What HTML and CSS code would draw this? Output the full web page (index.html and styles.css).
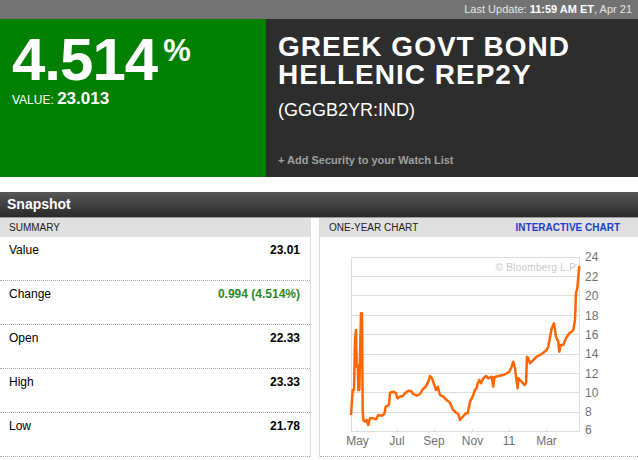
FILE: index.html
```html
<!DOCTYPE html>
<html lang="en">
<head>
<meta charset="UTF-8">
<meta name="viewport" content="width=device-width, initial-scale=1.0">
<title>GGGB2YR:IND Quote</title>
<link rel="stylesheet" href="styles.css">
</head>
<body>

<div class="topbar">Last Update: <b>11:59 AM ET</b>, Apr 21</div>

<div class="quote">
    <div class="quote-price">
        <div class="price">4.514<span class="pct">%</span></div>
        <div class="value">VALUE: <b>23.013</b></div>
    </div>
    <div class="quote-name">
        <h1 class="name">GREEK GOVT BOND<br>HELLENIC REP2Y</h1>
        <div class="ticker">(GGGB2YR:IND)</div>
        <div class="watch">+ Add Security to your Watch List</div>
    </div>
</div>

<div class="snapshot">
    <div class="section-head">Snapshot</div>
    <div class="snap-body">
        <div class="summary">
            <div class="panel-head">SUMMARY</div>
            <div class="row"><span>Value</span><b>23.01</b></div>
            <div class="row"><span>Change</span><b class="up">0.994 (4.514%)</b></div>
            <div class="row"><span>Open</span><b>22.33</b></div>
            <div class="row"><span>High</span><b>23.33</b></div>
            <div class="row"><span>Low</span><b>21.78</b></div>
        </div>
        <div class="chart-panel">
            <div class="panel-head">
                <span>ONE-YEAR CHART</span>
                <a class="chart-link" href="#">INTERACTIVE CHART</a>
            </div>
            <div class="chart">
                <svg width="318" height="219" viewBox="320 237 318 219">
                    <g stroke="#dddddd" stroke-width="1" fill="none">
                        <rect x="351.5" y="257.5" width="228" height="174"/>
                        <line x1="351" y1="276.5" x2="580" y2="276.5"/>
                        <line x1="351" y1="295.5" x2="580" y2="295.5"/>
                        <line x1="351" y1="315.5" x2="580" y2="315.5"/>
                        <line x1="351" y1="334.5" x2="580" y2="334.5"/>
                        <line x1="351" y1="354.5" x2="580" y2="354.5"/>
                        <line x1="351" y1="373.5" x2="580" y2="373.5"/>
                        <line x1="351" y1="392.5" x2="580" y2="392.5"/>
                        <line x1="351" y1="412.5" x2="580" y2="412.5"/>
                        <line x1="357.5" y1="429" x2="357.5" y2="432"/>
                        <line x1="397.5" y1="429" x2="397.5" y2="432"/>
                        <line x1="434.5" y1="429" x2="434.5" y2="432"/>
                        <line x1="472.5" y1="429" x2="472.5" y2="432"/>
                        <line x1="509.5" y1="429" x2="509.5" y2="432"/>
                        <line x1="546.5" y1="429" x2="546.5" y2="432"/>
                    </g>
                    <text class="mark" x="578" y="271" text-anchor="end">© Bloomberg L.P.</text>
                    <g class="axis">
                        <text x="585" y="261">24</text>
                        <text x="585" y="281">22</text>
                        <text x="585" y="300">20</text>
                        <text x="585" y="320">18</text>
                        <text x="585" y="339">16</text>
                        <text x="585" y="358">14</text>
                        <text x="585" y="378">12</text>
                        <text x="585" y="397">10</text>
                        <text x="585" y="416">8</text>
                        <text x="585" y="434">6</text>
                    </g>
                    <g class="axis" text-anchor="middle">
                        <text x="357.5" y="445">May</text>
                        <text x="397" y="445">Jul</text>
                        <text x="434" y="445">Sep</text>
                        <text x="472.5" y="445">Nov</text>
                        <text x="509" y="445">11</text>
                        <text x="546.5" y="445">Mar</text>
                    </g>
                    <polyline fill="none" stroke="#ff6600" stroke-width="2.5" stroke-linejoin="round"
                        points="351,415 352.7,390 354,390 355,340 356,330 356.7,366.7 357.7,365 358.3,390 359.3,390 360,356.7 361,313.3 362,313.3 362.7,410 363.3,420 365,421.7 366.7,420 368.3,425 370,418.3 373.3,418.3 376,419.3 378.3,415 381.7,415.7 384.3,414 385.7,406.7 389,405 390,392.7 393.3,391.7 396,393.3 397.3,398.3 400,396.7 402.7,396 405,393.3 408.3,390.7 411,391 413.3,394 416.7,395.7 420,394 422.7,389.3 425.7,386.7 428.3,381.7 430,376 432,378.3 434.3,385 436,390 437.7,386.7 440,395 443.3,396.7 446.7,400 450,402.7 452.7,409.3 456,412.7 458.3,414 460,420 462.7,416.7 466,413.3 467.7,413.3 470,401.7 472.7,396.7 475,390 476.7,388.3 477.7,383.3 479.3,380 481,383.3 483.3,378.3 486,376 488.3,378.3 491.7,376.7 493.3,386.7 494.3,377.3 498.3,376 503.3,375 506.7,373.3 509.3,371.7 511.7,366.7 513.3,361.7 515,368.3 516.7,381.7 517.7,388.3 518.3,378.3 521.7,381.7 524.3,385 526,383.3 527,356.7 528.3,358.3 530,363.3 533.3,360 536.7,356.7 540,355 543.3,352.7 546.7,350 548.3,346.7 550,337.3 551.7,328.3 554,323.3 556,336.7 558.3,341.7 559.3,351.7 560.7,345 563.3,345 566,338.3 569.3,333.3 571.7,331.7 573.3,330 575,320 576,293.3 577.3,288.3 578.3,276.7 579.3,266"/>
                </svg>
            </div>
        </div>
    </div>
</div>

</body>
</html>
```

FILE: styles.css
```css
body {
    margin: 0;
    width: 638px;
    font-family: "Liberation Sans", Arial, sans-serif;
    background: #ffffff;
    color: #000000;
}
.topbar {
    height: 19px;
    line-height: 19px;
    background: #727272;
    color: #e4e4e4;
    font-size: 11px;
    text-align: right;
    padding-right: 6px;
}
.topbar b {
    color: #ffffff;
}
.quote {
    display: flex;
    height: 158px;
}
.quote-price {
    width: 254px;
    padding: 12px 0 0 12px;
    background: #008000;
    color: #ffffff;
}
.price {
    font-size: 60px;
    line-height: 58px;
    height: 58px;
    font-weight: bold;
    letter-spacing: -1px;
}
.pct {
    font-size: 31px;
    line-height: 31px;
    letter-spacing: 0;
    vertical-align: 19px;
    margin-left: 6px;
}
.value {
    margin-top: 1px;
    font-size: 12px;
    line-height: 18px;
}
.value b {
    font-size: 17px;
}
.quote-name {
    flex: 1;
    padding: 14px 0 0 12px;
    background: #2d2d2d;
    color: #ffffff;
}
.name {
    margin: 0;
    font-size: 28px;
    line-height: 28px;
    letter-spacing: 1px;
}
.ticker {
    margin-top: 11px;
    font-size: 18px;
    line-height: 20px;
}
.watch {
    margin-top: 33px;
    font-size: 11px;
    line-height: 14px;
    font-weight: bold;
    color: #a0a0a0;
}
.snapshot {
    margin-top: 15px;
}
.section-head {
    height: 25px;
    line-height: 25px;
    padding-left: 7px;
    background: linear-gradient(#575757, #2a2a2a);
    border-bottom: 1px solid #9a9a9a;
    color: #ffffff;
    font-size: 14px;
    font-weight: bold;
}
.snap-body {
    display: flex;
    gap: 8px;
}
.summary {
    width: 310px;
    border-right: 1px solid #dddddd;
}
.chart-panel {
    flex: 1;
    border-left: 1px solid #dddddd;
}
.panel-head {
    display: flex;
    justify-content: space-between;
    height: 19px;
    line-height: 19px;
    padding: 0 18px 0 9px;
    background: #e0e0e0;
    color: #222222;
    font-size: 10px;
}
.chart-link {
    color: #1a3fcc;
    font-weight: bold;
    text-decoration: none;
}
.row {
    display: flex;
    justify-content: space-between;
    height: 37px;
    padding: 6px 10px 0 9px;
    border-bottom: 1px dotted #a8a8a8;
    font-size: 12px;
    line-height: 14px;
}
.up {
    color: #2a8a2a;
}
.chart {
    height: 219px;
    border-bottom: 1px dotted #a8a8a8;
}
.chart svg {
    display: block;
}
.axis {
    font-family: "Liberation Sans", Arial, sans-serif;
    font-size: 12px;
    fill: #707070;
}
.mark {
    font-family: "Liberation Sans", Arial, sans-serif;
    font-size: 10px;
    letter-spacing: 0.3px;
    fill: #c8c8c8;
}
```
